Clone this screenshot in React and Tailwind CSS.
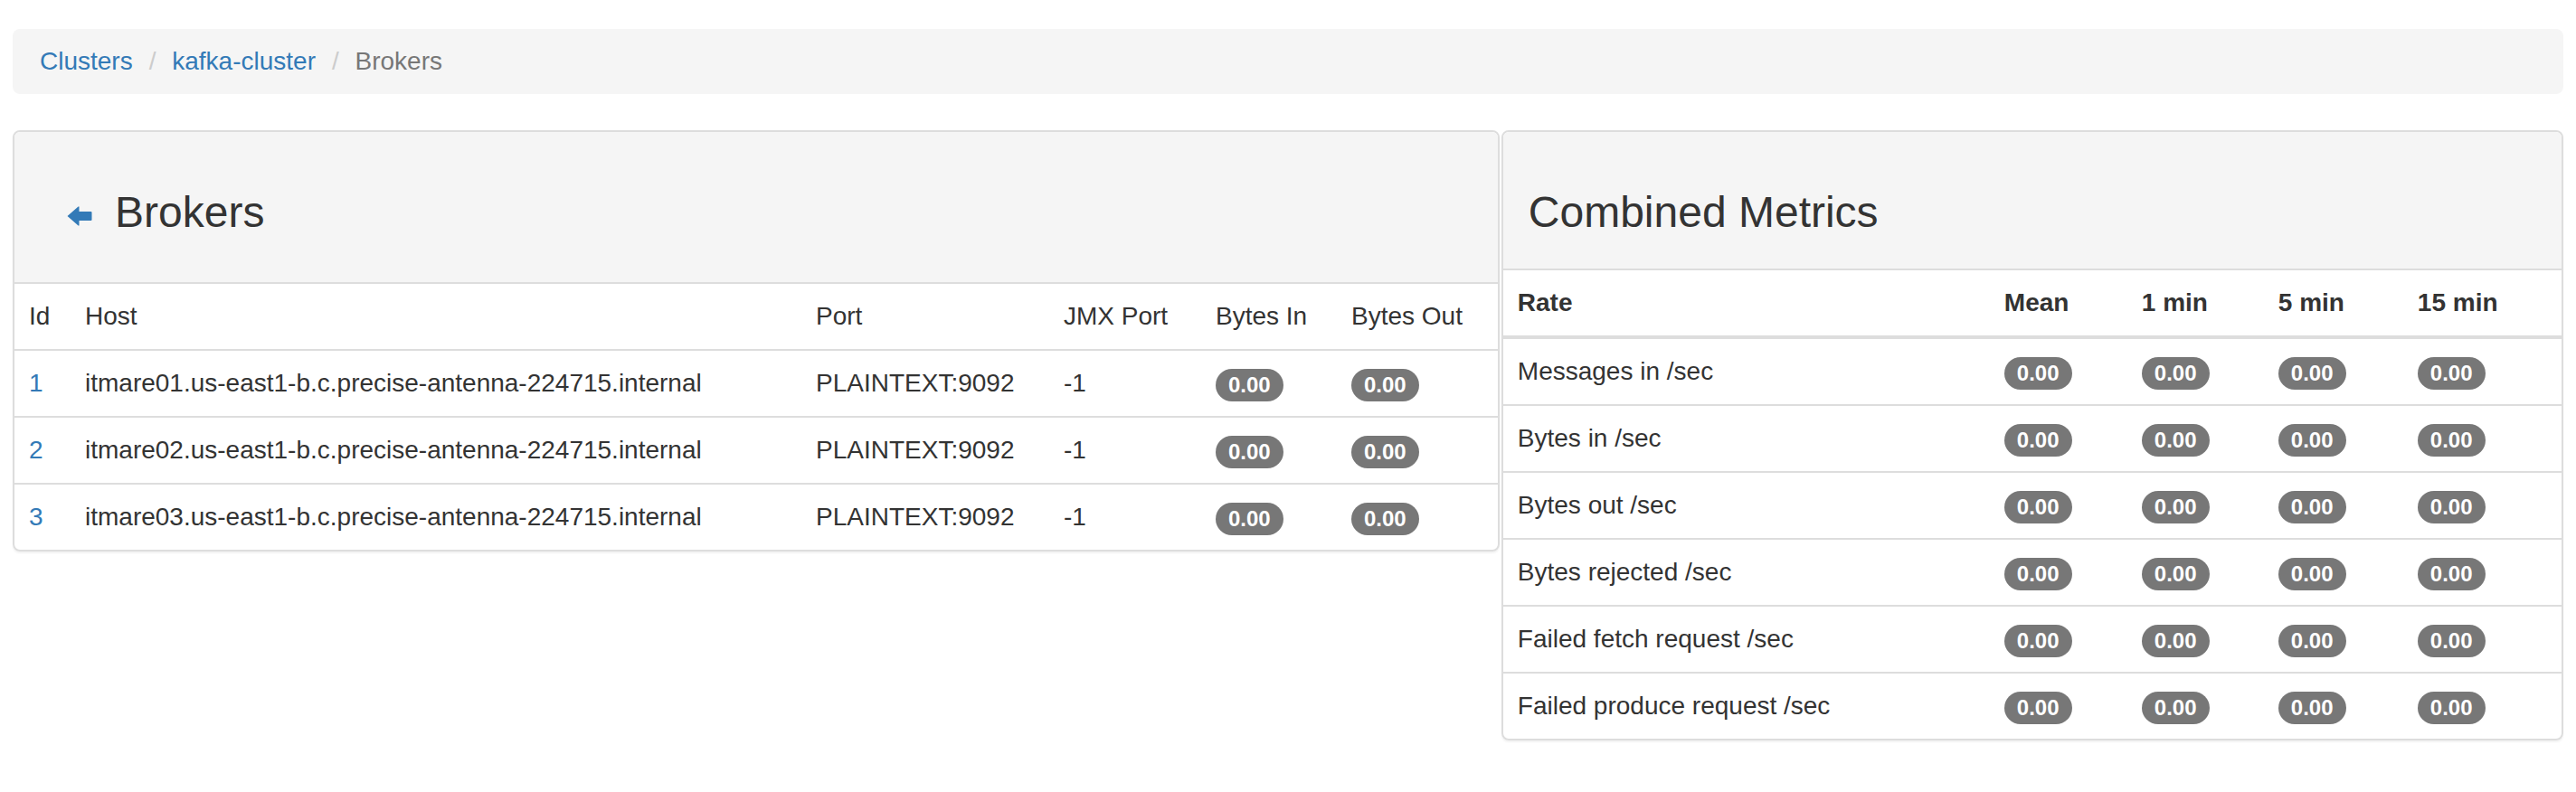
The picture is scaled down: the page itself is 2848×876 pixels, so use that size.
import React from 'react';

const brokers = [
  { id: 1, host: 'itmare01.us-east1-b.c.precise-antenna-224715.internal' },
  { id: 2, host: 'itmare02.us-east1-b.c.precise-antenna-224715.internal' },
  { id: 3, host: 'itmare03.us-east1-b.c.precise-antenna-224715.internal' },
];

const metrics = [
  'Messages in /sec',
  'Bytes in /sec',
  'Bytes out /sec',
  'Bytes rejected /sec',
  'Failed fetch request /sec',
  'Failed produce request /sec',
];

const Badge = ({ value }) => (
  <span className="inline-block align-middle bg-[#777] text-white text-[24px] font-bold leading-none px-[14px] py-[6px] rounded-[20px]">
    {value}
  </span>
);

const BackArrow = () => (
  <svg width="28" height="22" viewBox="0 0 28 22" className="ml-[28px] mr-[25px] mt-[9px] shrink-0">
    <path d="M0.5 11 L12.5 0.5 L13.5 0.5 L13.5 6 L26.5 6 Q27.5 6 27.5 7 L27.5 15 Q27.5 16 26.5 16 L13.5 16 L13.5 21.5 L12.5 21.5 Z" fill="#337ab7" />
  </svg>
);

const App = () => {
  return (
    <div className="min-h-screen bg-white px-[14px] pt-[32px] font-['Liberation_Sans',Arial,sans-serif] text-[28px] leading-[40px] text-[#333]">
      {/* Breadcrumb */}
      <div className="flex items-center bg-[#f5f5f5] rounded-[8px] px-[30px] py-[16px] mb-[40px]">
        <span className="text-[#337ab7]">Clusters</span>
        <span className="text-[#ccc] pl-[18px] pr-[10px]">/{'\u00a0'}</span>
        <span className="text-[#337ab7]">kafka-cluster</span>
        <span className="text-[#ccc] pl-[18px] pr-[10px]">/{'\u00a0'}</span>
        <span className="text-[#777]">Brokers</span>
      </div>

      <div className="grid grid-cols-[7fr_5fr] gap-[2px] items-start">
        {/* Brokers panel */}
        <div className="border-2 border-[#ddd] rounded-[8px] overflow-hidden shadow-[0_2px_2px_rgba(0,0,0,0.05)]">
          <div className="h-[168px] bg-[#f5f5f5] border-b-2 border-[#ddd] pt-[62px] px-[30px]">
            <h3 className="flex items-center text-[48px] leading-[53px] font-medium m-0">
              <BackArrow />
              Brokers
            </h3>
          </div>
          <table className="w-full table-fixed">
            <tbody>
              <tr className="border-b-2 border-[#ddd]">
                <td className="w-[62px] p-[16px]">Id</td>
                <td className="w-[808px] p-[16px]">Host</td>
                <td className="w-[274px] p-[16px]">Port</td>
                <td className="w-[168px] p-[16px]">JMX Port</td>
                <td className="w-[150px] p-[16px]">Bytes In</td>
                <td className="p-[16px] whitespace-nowrap">Bytes Out</td>
              </tr>
              {brokers.map((b, i) => (
                <tr key={b.id} className={i < brokers.length - 1 ? 'border-b-2 border-[#ddd]' : ''}>
                  <td className="p-[16px] text-[#337ab7]">{b.id}</td>
                  <td className="p-[16px] whitespace-nowrap">{b.host}</td>
                  <td className="p-[16px]">PLAINTEXT:9092</td>
                  <td className="p-[16px]">-1</td>
                  <td className="p-[16px]"><Badge value="0.00" /></td>
                  <td className="p-[16px]"><Badge value="0.00" /></td>
                </tr>
              ))}
            </tbody>
          </table>
        </div>

        {/* Combined metrics panel */}
        <div className="border-2 border-[#ddd] rounded-[8px] overflow-hidden shadow-[0_2px_2px_rgba(0,0,0,0.05)]">
          <div className="h-[153px] bg-[#f5f5f5] border-b-2 border-[#ddd] pt-[62px] px-[30px]">
            <h3 className="text-[48px] leading-[53px] font-medium m-0 -ml-[2px]">Combined Metrics</h3>
          </div>
          <table className="w-full table-fixed">
            <thead>
              <tr className="border-b-4 border-[#ddd]">
                <th className="w-[538px] p-[16px] text-left font-bold">Rate</th>
                <th className="w-[152px] p-[16px] text-left font-bold">Mean</th>
                <th className="w-[151px] p-[16px] text-left font-bold">1 min</th>
                <th className="w-[154px] p-[16px] text-left font-bold">5 min</th>
                <th className="p-[16px] text-left font-bold">15 min</th>
              </tr>
            </thead>
            <tbody>
              {metrics.map((m, i) => (
                <tr key={m} className={i < metrics.length - 1 ? 'border-b-2 border-[#ddd]' : ''}>
                  <td className="p-[16px] whitespace-nowrap">{m}</td>
                  <td className="p-[16px]"><Badge value="0.00" /></td>
                  <td className="p-[16px]"><Badge value="0.00" /></td>
                  <td className="p-[16px]"><Badge value="0.00" /></td>
                  <td className="p-[16px]"><Badge value="0.00" /></td>
                </tr>
              ))}
            </tbody>
          </table>
        </div>
      </div>
    </div>
  );
};

export default App;
